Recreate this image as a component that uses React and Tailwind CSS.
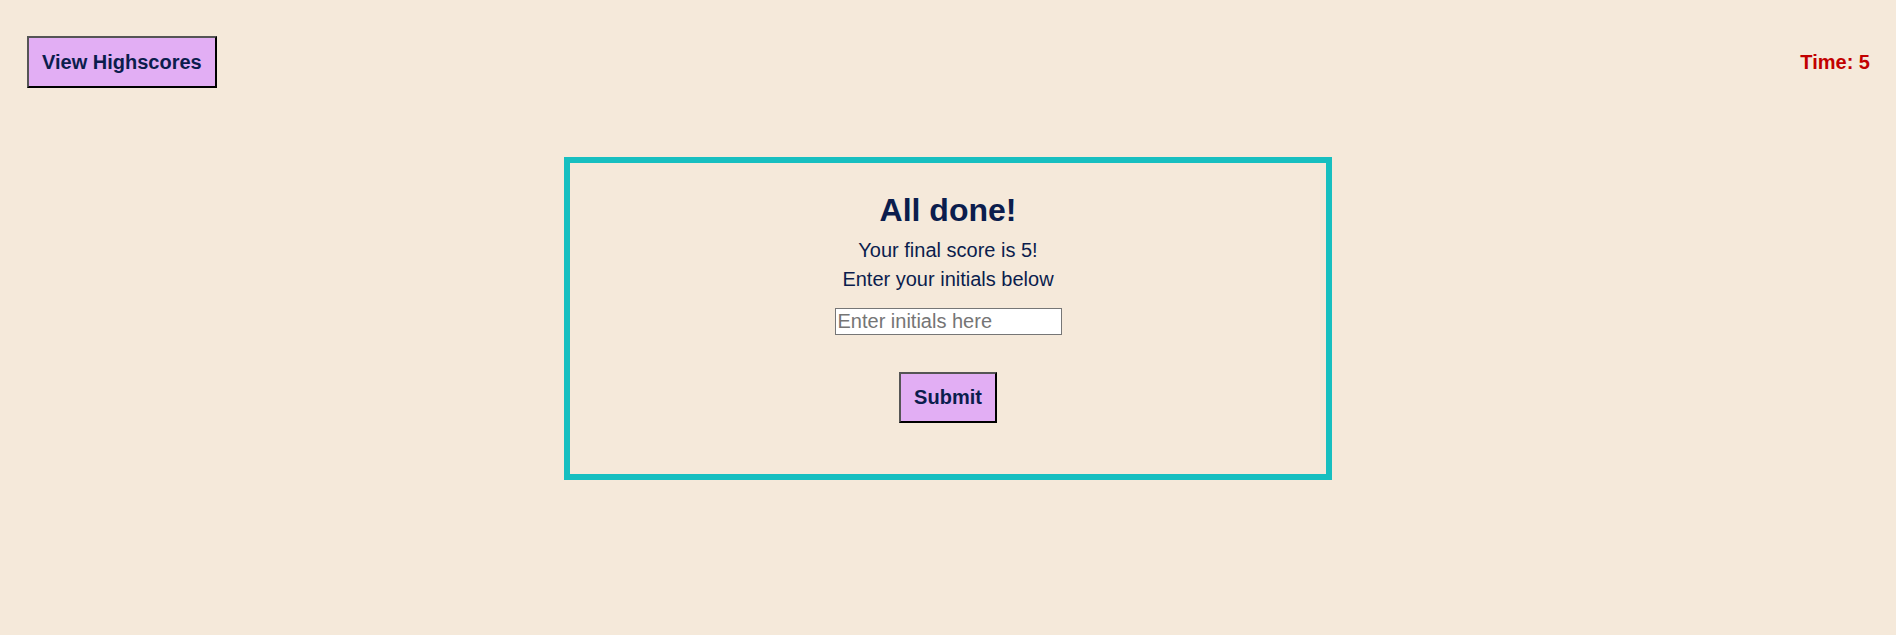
import React, { useState } from 'react';

const btn =
    'border-2 border-t-[#555555] border-l-[#555555] border-b-black border-r-black bg-[#e2aef4] px-[13px] text-[20px] leading-[23px] font-bold text-[#0b1d4d]';

const App = () => {
    const [initials, setInitials] = useState('');

    return (
        <div className="min-h-[635px] bg-[#f5e9da] font-['Liberation_Sans',Arial,sans-serif] text-[#0b1d4d]">
            <header className="flex items-center justify-between pl-[27px] pr-[26px] pt-[36px]">
                <button className={`${btn} h-[52px]`}>View Highscores</button>
                <span className="text-[20px] leading-[23px] font-bold text-[#c20000]">Time: 5</span>
            </header>

            <main className="flex justify-center pt-[69px]">
                <div className="flex w-[768px] flex-col items-center border-[6px] border-[#17bfc0] pt-[29px] pb-[51px]">
                    <h1 className="text-[32px] leading-[37px] font-bold">All done!</h1>
                    <p className="mt-[10px] text-[20px] leading-[23px]">Your final score is 5!</p>
                    <p className="mt-[6px] text-[20px] leading-[23px]">Enter your initials below</p>
                    <input
                        type="text"
                        value={initials}
                        onChange={e => setInitials(e.target.value)}
                        placeholder="Enter initials here"
                        className="mt-[17px] h-[27px] w-[227px] border border-[#767676] bg-white px-[2px] text-[20px] leading-[23px] text-black placeholder:text-[#757575]"
                    />
                    <button className={`${btn} mt-[37px] h-[51px]`}>Submit</button>
                </div>
            </main>
        </div>
    );
};

export default App;
